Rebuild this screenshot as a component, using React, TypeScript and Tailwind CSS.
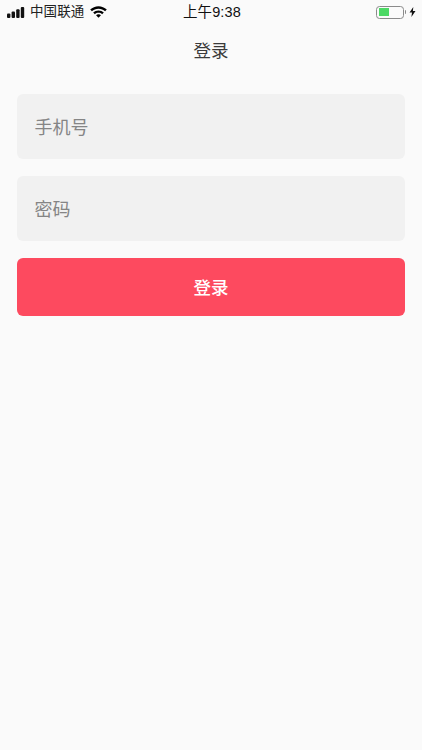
export default function App() {
  const cjk = { fontFamily: '"Noto Sans CJK SC", sans-serif' };
  return (
    <div className="w-[422px] h-[750px] bg-[#fafafa] text-[#222] flex flex-col overflow-hidden font-['Liberation_Sans','Noto_Sans_CJK_SC',sans-serif]">
      <div className="h-[24px] relative flex items-center justify-between pl-[7px] pr-[6px]">
        <div className="flex items-center">
          <svg width="20" height="11" viewBox="0 0 20 11" className="mr-[3px]" fill="#111">
            <rect x="0" y="6.5" width="3.4" height="4.5" rx="1" />
            <rect x="4.6" y="4.5" width="3.4" height="6.5" rx="1" />
            <rect x="9.2" y="2.2" width="3.4" height="8.8" rx="1" />
            <rect x="13.8" y="0" width="3.4" height="11" rx="1" />
          </svg>
          <span className="text-[13.5px] leading-none text-[#222] tracking-[0.1px]">中国联通</span>
          <svg width="17" height="12" viewBox="0 0 16 11" className="ml-[6px] -mt-[1px]" fill="#000">
            <path d="M8 0C5 0 2.3 1.2 0.2 3.2L1.8 4.9C3.4 3.3 5.6 2.4 8 2.4S12.6 3.3 14.2 4.9L15.8 3.2C13.7 1.2 11 0 8 0Z" />
            <path d="M8 4C6.1 4 4.3 4.7 3 6L4.6 7.6C5.5 6.7 6.7 6.3 8 6.3S10.5 6.7 11.4 7.6L13 6C11.7 4.7 9.9 4 8 4Z" />
            <path d="M8 7.7C7.1 7.7 6.3 8 5.7 8.6L8 11L10.3 8.6C9.7 8 8.9 7.7 8 7.7Z" />
          </svg>
        </div>
        <span className="absolute left-[183px] top-[4px] text-[14.5px] leading-[16px] tracking-[0.1px] text-[#111]">上午9:38</span>
        <div className="flex items-center">
          <div className="w-[28px] h-[13px] rounded-[3.5px] border border-[#8a8a8a] p-[1.5px] pl-[2px] flex">
            <div className="w-[10px] bg-[#4cd964]" />
          </div>
          <div className="w-[1.5px] h-[4px] bg-[#8a8a8a] ml-[1px] rounded-r-sm" />
          <svg width="7" height="10" viewBox="0 0 7 10" className="ml-[3px]" fill="#111">
            <path d="M4.3 0L0.5 5.6H3L2.4 10L6.5 4H3.9Z" />
          </svg>
        </div>
      </div>
      <div className="h-[52px] flex items-center justify-center text-[17.5px] text-[#3a3a3a]" style={cjk}>登录</div>
      <div className="px-[17px] pt-[18px] flex flex-col gap-[17px]">
        <div className="h-[65px] rounded-md bg-[#f1f1f1] flex items-center px-[17.5px] text-[18px] text-[#858585]" style={cjk}>手机号</div>
        <div className="h-[65px] rounded-md bg-[#f1f1f1] flex items-center px-[17.5px] text-[18px] text-[#858585]" style={cjk}>密码</div>
        <button className="h-[58px] rounded-md bg-[#fd4a5f] text-[#fff] text-[17.5px] font-medium flex items-center justify-center" style={cjk}>登录</button>
      </div>
    </div>
  );
}
